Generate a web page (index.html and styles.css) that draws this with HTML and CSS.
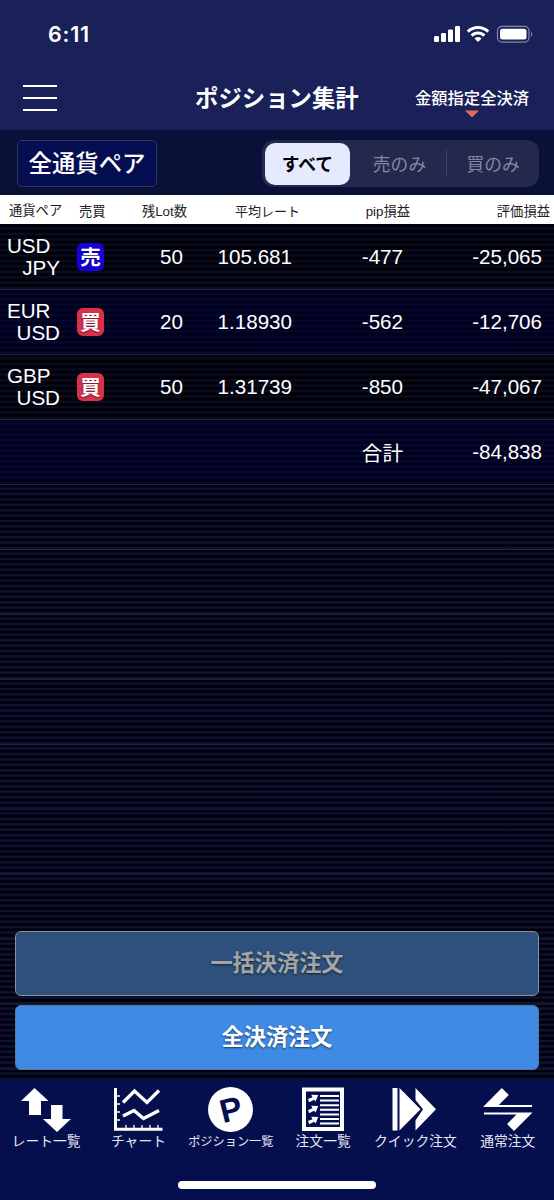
FILE: index.html
```html
<!DOCTYPE html>
<html lang="ja">
  <head>
    <meta charset="UTF-8" />
    <meta name="viewport" content="width=device-width, initial-scale=1.0" />
    <title>ポジション集計</title>
    <link rel="stylesheet" href="styles.css">
  </head>
  <body>
    <div class="app">
      <div class="status-bar">
        <span class="time">6:11</span>
        <svg class="status-icons" width="100" height="20" viewBox="0 0 100 20" fill="#fff">
          <rect x="0" y="11" width="5" height="6" rx="1.2" />
          <rect x="7" y="8" width="5" height="9" rx="1.2" />
          <rect x="14" y="4.5" width="5" height="12.5" rx="1.2" />
          <rect x="21" y="1" width="5" height="16" rx="1.2" />
          <g fill="none" stroke="#fff" stroke-width="3">
            <path d="M33.8 6.6a14.5 14.5 0 0 1 20.4 0" />
            <path d="M37.6 10.6a9 9 0 0 1 12.8 0" />
          </g>
          <path d="M40.5 13.4a5 5 0 0 1 7 0L44 17z" />
          <rect x="63.5" y="1.3" width="31.5" height="15.8" rx="4.5" fill="none" stroke="#8488aa" stroke-width="1.2" />
          <rect x="66" y="3.8" width="26.5" height="10.8" rx="2.5" />
          <path d="M97 6.5q2.6 2.7 0 5.4z" fill="#8488aa" />
        </svg>
      </div>

      <div class="nav">
        <div class="menu"><i></i><i></i><i></i></div>
        <div class="title">ポジション集計</div>
        <div class="close-all">
          金額指定全決済
          <svg width="14" height="8" viewBox="0 0 14 8"><path d="M0 .5h14L7 7.5z" fill="#e8695f" /></svg>
        </div>
      </div>

      <div class="filter">
        <div class="pair-btn">全通貨ペア</div>
        <div class="segment">
          <div class="seg active">すべて</div>
          <div class="seg">売のみ</div>
          <div class="seg last">買のみ</div>
        </div>
      </div>

      <div class="table-head row">
        <div class="c-pair">通貨ペア</div>
        <div class="c-side">売買</div>
        <div class="c-lot">残Lot数</div>
        <div class="c-rate">平均レート</div>
        <div class="c-pip">pip損益</div>
        <div class="c-pl">評価損益</div>
      </div>

      <div class="list">
        <div class="row">
          <div class="c-pair">USD<span>JPY</span></div>
          <div class="c-side"><b class="sell">売</b></div>
          <div class="c-lot">50</div>
          <div class="c-rate">105.681</div>
          <div class="c-pip">-477</div>
          <div class="c-pl">-25,065</div>
        </div>
        <div class="row even">
          <div class="c-pair">EUR<span>USD</span></div>
          <div class="c-side"><b class="buy">買</b></div>
          <div class="c-lot">20</div>
          <div class="c-rate">1.18930</div>
          <div class="c-pip">-562</div>
          <div class="c-pl">-12,706</div>
        </div>
        <div class="row">
          <div class="c-pair">GBP<span>USD</span></div>
          <div class="c-side"><b class="buy">買</b></div>
          <div class="c-lot">50</div>
          <div class="c-rate">1.31739</div>
          <div class="c-pip">-850</div>
          <div class="c-pl">-47,067</div>
        </div>
        <div class="row even">
          <div class="c-pair"></div>
          <div class="c-side"></div>
          <div class="c-lot"></div>
          <div class="c-rate"></div>
          <div class="c-pip">合計</div>
          <div class="c-pl">-84,838</div>
        </div>
        <div class="empty"></div>
        <div class="empty"></div>
        <div class="empty"></div>
        <div class="empty"></div>
        <div class="empty"></div>
        <div class="empty"></div>
        <div class="empty"></div>
        <div class="empty"></div>
        <div class="empty"></div>
        <div class="empty"></div>

        <div class="actions">
          <div class="btn disabled">一括決済注文</div>
          <div class="btn">全決済注文</div>
        </div>
      </div>

      <div class="tab-bar">
        <div class="tab">
          <svg width="50" height="46" viewBox="0 0 50 46" fill="#fff">
            <path d="M13.5 1L27.500 14H20v14H8V14H0z" />
            <path d="M30 18h11.500v14H50L36 45 22 32h8z" />
          </svg>
          <span>レート一覧</span>
        </div>
        <div class="tab">
          <svg width="50" height="46" viewBox="0 0 50 46" fill="none" stroke="#fff">
            <path d="M2.500 1v41.200h47" stroke-width="3" />
            <path d="M4 9h3M4 17h3M4 25h3M4 33h3M13 41v-3M21 41v-3M29 41v-3M37 41v-3M45 41v-3" stroke-width="1.3" />
            <path d="M10 15.500L21.500 4 34 15.500 46 3.500M10 29l11-5.500 9.500 8L46 23.500" stroke-width="3.4" />
          </svg>
          <span>チャート</span>
        </div>
        <div class="tab">
          <svg width="50" height="46" viewBox="0 0 50 46">
            <circle cx="24.5" cy="22.5" r="22.5" fill="#fff" />
            <text class="p-mark" x="25" y="34" text-anchor="middle" transform="rotate(-14 25 23)">P</text>
          </svg>
          <span class="small">ポジション一覧</span>
        </div>
        <div class="tab">
          <svg width="50" height="46" viewBox="0 0 50 46">
            <rect x="6" y="2.5" width="38" height="39.5" fill="none" stroke="#fff" stroke-width="4" />
            <path d="M22 9h19M22 13.600h19M22 18.200h19M22 22.800h19M22 27.400h19M22 32h19M22 36.600h19" stroke="#fff" stroke-width="2" />
            <g fill="#fff">
              <path id="arw" d="M10 12l4.500-1.800-1.300-2.500 7 .3-2.600 6.500-1.500-1.800-5 2.500z" />
              <use href="#arw" y="11" />
              <use href="#arw" y="22" />
            </g>
          </svg>
          <span>注文一覧</span>
        </div>
        <div class="tab">
          <svg width="50" height="46" viewBox="0 0 50 46" fill="#fff">
            <path d="M2.500 1h5v42.500h-5zM9.500 1l21 21.200-21 21.300z" />
            <path d="M25.500 1L46 22.200 25.500 43.500V33.500l7.500-11.300-7.500-9.200z" />
          </svg>
          <span>クイック注文</span>
        </div>
        <div class="tab">
          <svg width="50" height="46" viewBox="0 0 50 46" fill="#fff">
            <path d="M.5 19.500L18.800 1l7 7-10 10H49v2H.5z" />
            <path d="M49.500 25.500L31 44l-7-7 9.500-9.500H1v-2z" />
          </svg>
          <span>通常注文</span>
        </div>
      </div>
      <div class="home"><i></i></div>
    </div>
  </body>
</html>
```
FILE: styles.css
```css
* {
  box-sizing: border-box;
}

body {
  margin: 0;
  background: #060f4e;
  color: #fff;
  font-family: "Liberation Sans", "Noto Sans CJK JP", sans-serif;
}

.app {
  width: 554px;
  height: 1200px;
  display: flex;
  flex-direction: column;
  overflow: hidden;
  white-space: nowrap;
}

/* header */
.status-bar {
  height: 66px;
  background: #1a2158;
  display: flex;
  justify-content: space-between;
  padding: 25px 20px 0 48px;
}

.time {
  font: 600 21.5px/19px Inter, sans-serif;
  letter-spacing: 0.8px;
}

.nav {
  height: 64px;
  background: #1a2158;
  display: flex;
  align-items: flex-start;
  font-family: "Noto Sans CJK JP", sans-serif;
}

.menu {
  width: 195px;
  padding: 19px 0 0 23px;
  display: flex;
  flex-direction: column;
  gap: 10px;
}

.menu i {
  width: 34px;
  height: 2px;
  background: #fff;
}

.title {
  width: 220px;
  font-size: 23.4px;
  font-weight: 700;
  line-height: 62px;
}

.close-all {
  width: 114px;
  font-size: 16.3px;
  font-weight: 500;
  line-height: 24px;
  padding-top: 19px;
  display: flex;
  flex-direction: column;
  align-items: center;
}

.close-all svg {
  margin-top: 1px;
}

.filter {
  height: 65px;
  background: #0a1138;
  display: flex;
  justify-content: space-between;
  align-items: flex-start;
  padding: 10px 15px 0 17px;
  font-family: "Noto Sans CJK JP", sans-serif;
}

.pair-btn {
  width: 140px;
  height: 47px;
  background: #040e50;
  border: 1.5px solid #30365f;
  border-radius: 5px;
  font-size: 23.4px;
  font-weight: 500;
  line-height: 43px;
  text-align: center;
}

.segment {
  width: 277px;
  height: 47px;
  background: #24284d;
  border-radius: 12px;
  display: flex;
  align-items: center;
  padding: 0 3px;
}

.seg {
  width: 97px;
  padding-left: 3px;
  text-align: center;
  font-size: 17.8px;
  line-height: 27px;
  color: #85879f;
}

.seg.active {
  width: 85px;
  height: 42px;
  padding: 0;
  line-height: 41px;
  background: #e6eaff;
  border-radius: 10px;
  color: #000;
  font-weight: 700;
}

.seg.last {
  width: 90px;
  border-left: 1px solid #404462;
}

/* positions table */
.row {
  display: flex;
  align-items: center;
}

.c-pair {
  width: 60px;
  padding-left: 7px;
  line-height: 22px;
}

.c-pair span {
  display: block;
  text-align: right;
}

.c-side {
  width: 60px;
  padding-left: 17px;
}

.c-lot {
  width: 63px;
  text-align: right;
}

.c-rate {
  width: 109px;
  text-align: right;
}

.c-pip {
  width: 111px;
  text-align: right;
}

.c-pl {
  width: 139px;
  text-align: right;
}

.table-head {
  height: 29px;
  background: #fff;
  color: #222;
  font-size: 13.3px;
  padding-top: 2px;
}

.table-head .c-pair {
  width: 62px;
  padding-left: 9px;
}

.table-head .c-side {
  width: 62px;
}

.table-head .c-rate {
  width: 113px;
  font-size: 13px;
}

.table-head .c-pip {
  width: 110px;
}

.table-head .c-pl {
  width: 140px;
}

.list {
  flex: 1;
  min-height: 0;
  padding-top: 1px;
  position: relative;
  overflow: hidden;
  background: #00000c;
}

.list .row,
.empty {
  height: 65px;
  border-bottom: 1px solid #22243c;
}

.list .row {
  font-size: 20.6px;
  background: repeating-linear-gradient(#00000a 0 2px, #0b0d1e 3px 4px, #00000a 5.4px);
}

.list .row.even {
  background: repeating-linear-gradient(#00001c 0 2px, #05082e 3px 4px, #00001c 5.4px);
}

.empty {
  background: repeating-linear-gradient(#00000f 0 2px, #101434 3px 4px, #00000f 5.4px);
}

.empty:nth-child(n + 9) {
  border-bottom-color: #181a34;
}

.c-side b {
  display: block;
  width: 27px;
  height: 28px;
  border-radius: 6px;
  font-size: 20.5px;
  line-height: 29px;
  text-align: center;
  text-shadow: 0 1px 2px rgba(0, 0, 0, 0.5);
}

.sell {
  background: #1500df;
}

.buy {
  background: #d9304c;
}

/* order buttons float over the list */
.actions {
  position: absolute;
  left: 15px;
  right: 15px;
  bottom: 9px;
  display: flex;
  flex-direction: column;
  gap: 9px;
}

.btn {
  height: 65px;
  background: #3e8ae5;
  border: 1px solid #57779c;
  border-radius: 6px;
  font-size: 22.2px;
  font-weight: 700;
  line-height: 63px;
  text-align: center;
  text-shadow: 0 1px 2px rgba(0, 0, 0, 0.6);
}

.btn.disabled {
  background: #2d507c;
  border-color: #8b9198;
  color: #a4a6a6;
}

/* bottom tabs */
.tab-bar {
  height: 89px;
  background: #060f4e;
  display: flex;
  padding-top: 8px;
}

.tab {
  width: 92.33px;
  display: flex;
  flex-direction: column;
  align-items: center;
}

.tab svg {
  display: block;
}

.tab span {
  font-size: 13.8px;
  line-height: 18px;
  color: #e4e6f2;
}

.tab .small {
  font-size: 12.2px;
}

.p-mark {
  font: bold 33px "Liberation Sans", sans-serif;
  fill: #060f4e;
}

.home {
  height: 32px;
  background: #060f4e;
  display: flex;
  justify-content: center;
  padding-top: 13px;
}

.home i {
  width: 198px;
  height: 8px;
  background: #fff;
  border-radius: 4px;
}
```
